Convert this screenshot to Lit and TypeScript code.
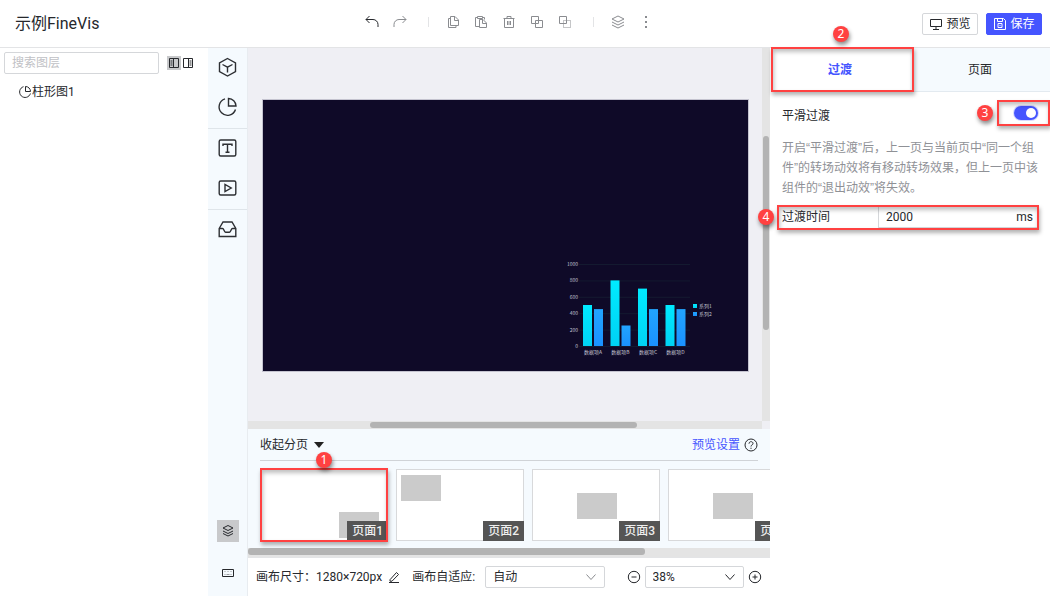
import { LitElement, html, css, svg } from "lit";
import { customElement, property, state } from "lit/decorators.js";
import { classMap } from "lit/directives/class-map.js";

const icon = (size: number, body: unknown, cls = "") =>
  html`<svg class="ico ${cls}" width=${size} height=${size} viewBox="0 0 ${size} ${size}" aria-hidden="true">${body}</svg>`;

const icons = {
  undo: icon(16, svg`<path d="M5.500 2 2 5.500 5.500 9M2 5.500h7a5 5 0 0 1 5 5V13"/>`, "dark"),
  redo: icon(16, svg`<path d="M10.500 2 14 5.500 10.500 9M14 5.500H7a5 5 0 0 0-5 5V13"/>`),
  copy: icon(16, svg`<path d="M5.500 2.500h4.500l3.500 3.500v5.500h-8zM9.500 2.500v4h4M5.500 4.500h-2v9h7.500v-2"/>`),
  paste: icon(16, svg`<path d="M6.500 12.500h-4v-9h2M10 3.500h1.500v2M4.500 2.500h5v2h-5zM6.500 5.500h3.500l3.500 3.500v4.500h-7zM9.500 5.500v4h4"/>`),
  trash: icon(16, svg`<path d="M2.500 4.500h11M6 4.500v-2h4v2M3.500 4.500v9h9v-9M6.500 7v4M8 7v4M9.500 7v4"/>`),
  group: icon(16, svg`<path d="M2.500 2.500h7v7h-7zM6.500 6.500h7v7h-7z"/>`),
  ungroup: icon(16, svg`<path d="M2.500 2.500h7v7h-7z"/><path stroke-dasharray="1 1" d="M6.500 6.500h7v7h-7z"/>`),
  layers: icon(16, svg`<path d="m8 2 6 3-6 3-6-3zM2 8l6 3 6-3M2 11l6 3 6-3"/>`),
  more: icon(16, svg`<path class="solid" d="M7 2h2v2H7zM7 7h2v2H7zM7 12h2v2H7z"/>`),
  monitor: icon(14, svg`<path d="M1.500 2.500h11v7h-11zM7 9.500v3M4 12.500h6"/>`, "dark"),
  save: icon(14, svg`<path d="M1.500 1.500h9l2 2v9h-11zM4.500 1.500v3h5v-3M5 6.500h4v4H5zM7 8v1"/>`, "light"),
  panelLeft: icon(12, svg`<path d="M1.500 1.500h9v9h-9zM5.500 1.500v9M2.500 4h2M2.500 6h2M2.500 8h2"/>`, "dark"),
  panelRight: icon(12, svg`<path d="M1.500 1.500h9v9h-9zM6.500 1.500v9M7.500 4h2M7.500 6h2M7.500 8h2"/>`, "dark"),
  pie: icon(14, svg`<path d="M5.500 1.700A5.500 5.500 0 1 0 12.400 8.500M7.500 1.500v5h5a5 5 0 0 0-5-5z"/>`, "dark"),
  cube: icon(20, svg`<path d="m10 1.500 8 4.300v8.900l-8 4.300-8-4.300V5.800zM5 7.500l5 2.700 5-2.700M10 10.200v5.300"/>`, "rail"),
  pieBig: icon(20, svg`<path d="M7.500 1.900A8.400 8.400 0 1 0 18 12.500M11 1.500v7.500h7.500A7.600 7.600 0 0 0 11 1.500z"/>`, "rail"),
  text: icon(20, svg`<rect x="1.700" y="2" width="16.600" height="16" rx="1.500"/><path d="M5.500 8V6.300h9V8M10 6.300v7.900M8 14.200h4"/>`, "rail"),
  play: icon(20, svg`<rect x="1.700" y="3" width="16.600" height="14" rx="1.500"/><path d="M7.500 6.500v7l6.200-3.500z"/>`, "rail"),
  inbox: icon(20, svg`<path d="M1.700 9.500 5.500 3h9l3.800 6.500v8H1.700zM1.700 9.500H5c1.500 0 1.500 3.700 3 3.700h4c1.500 0 1.500-3.700 3-3.700h3.300"/>`, "rail"),
  layersSmall: icon(14, svg`<path d="m7 1.500 5 2.500-5 2.500L2 4zM2 7l5 2.500L12 7M2 9.500 7 12l5-2.500"/>`, "dark"),
  keyboard: icon(14, svg`<path d="M1.500 3.500h11v7h-11z"/><path class="faint" d="M3.500 5.500h1M6.500 5.500h1M9.500 5.500h1M3.500 8.500h1M5.500 8.500h3M9.500 8.500h1"/>`, "dark"),
  help: icon(14, svg`<circle cx="7" cy="7" r="6"/><path d="M5 5.700C5 3 9 3 9 5.500 9 7 7 6.800 7 8.500M7 9.700v1.200"/>`, "dark"),
  pencil: icon(12, svg`<path d="M2 8.700 8.500 1.500l2 2L4 10.200H2zM1 11.500h10"/>`, "dark"),
  minus: icon(14, svg`<circle cx="7" cy="7" r="5.700"/><path d="M4.500 7h5"/>`, "dark"),
  plus: icon(14, svg`<circle cx="7" cy="7" r="5.700"/><path d="M4.500 7h5M7 4.500v5"/>`, "dark"),
  chevron: icon(12, svg`<path d="m1.500 3.500 4.500 5 4.500-5"/>`),
};

const iconCss = css`
  .ico { display: block; flex: none; fill: none; stroke: #8a8c90; stroke-width: 1; }
  .ico .solid { fill: #8a8c90; stroke: none; }
  .ico .faint { stroke: #9a9ca0; }
  .ico.dark { stroke: #26282c; }
  .ico.light { stroke: #fff; }
  .ico.rail { stroke: #2d2f33; stroke-width: 1.4; }
  * { box-sizing: border-box; }
  button { font: inherit; color: inherit; background: none; border: 0; padding: 0; }
`;

@customElement("step-badge")
export class StepBadge extends LitElement {
  @property({ type: Number }) step = 1;
  static styles = css`
    :host {
      position: absolute; z-index: 3; width: 16px; height: 16px; border-radius: 50%;
      background: #ff4141; color: #fff; box-shadow: 1px 3px 4px rgba(0, 0, 0, 0.45);
      font: 12px/16px "Noto Sans", sans-serif; text-align: center;
    }
  `;
  render() { return html`${this.step}`; }
}

@customElement("bar-chart")
export class BarChart extends LitElement {
  static styles = css`
    svg { display: block; width: 100%; }
    text { font: 5px "Noto Sans CJK SC", sans-serif; fill: #c0c1d0; }
    .axis { text-anchor: end; }
    .cat { text-anchor: middle; }
    .grid { stroke: #141a30; }
    .a { fill: url(#a); }
    .b { fill: url(#b); }
  `;
  private data = [
    { name: "数据项A", a: 500, b: 450 },
    { name: "数据项B", a: 800, b: 250 },
    { name: "数据项C", a: 700, b: 450 },
    { name: "数据项D", a: 500, b: 450 },
  ];
  private y(v: number) { return 86 - v * 0.082; }
  render() {
    return html`<svg viewBox="0 0 150 100" role="img" aria-label="柱形图1">
      <defs>
        <linearGradient id="a" x2="0" y2="1"><stop stop-color="#00eaff"/><stop offset="1" stop-color="#00d2f4"/></linearGradient>
        <linearGradient id="b" x2="0" y2="1"><stop stop-color="#22a4ff"/><stop offset="1" stop-color="#1a92ff"/></linearGradient>
      </defs>
      ${[0, 200, 400, 600, 800, 1000].map((v) => svg`
        <line class="grid" x1="17" x2="128" y1=${this.y(v) + 0.5} y2=${this.y(v) + 0.5}/>
        <text class="axis" x="16" y=${this.y(v) + 2}>${v}</text>`)}
      ${this.data.map((d, i) => {
        const x = 21 + i * 27.5;
        return svg`
          <rect class="a" x=${x} y=${this.y(d.a)} width="9" height=${d.a * 0.082}/>
          <rect class="b" x=${x + 11} y=${this.y(d.b)} width="9" height=${d.b * 0.082}/>
          <text class="cat" x=${x + 10} y="94">${d.name}</text>`;
      })}
      <rect class="a" x="131" y="44" width="4" height="4"/><text x="137" y="48">系列1</text>
      <rect class="b" x="131" y="52" width="4" height="4"/><text x="137" y="56">系列2</text>
    </svg>`;
  }
}

@customElement("app-root")
export class AppRoot extends LitElement {
  @state() private tab = 0;
  private pages = [
    { name: "页面1", place: "end" },
    { name: "页面2", place: "start" },
    { name: "页面3", place: "center" },
    { name: "页面4", place: "center" },
  ];

  static styles = [iconCss, css`
    :host {
      display: flex; flex-direction: column; height: 100vh; overflow: hidden; background: #fff;
      font: 12px/20px Roboto, "Noto Sans CJK SC", sans-serif; color: #26282c;
    }
    header {
      display: grid; grid-template-columns: 248px 1fr 280px; align-items: center; flex: none;
      height: 48px; border-bottom: 1px solid #e3e4e6;
    }
    h1 { margin: 0; padding-left: 15px; font-size: 16px; font-weight: 400; line-height: 24px; }
    .tools { display: flex; align-items: center; justify-content: center; gap: 12px; padding-bottom: 4px; }
    .sep { width: 1px; height: 10px; background: #e3e4e6; margin: 0 4px 0 8px; }
    .actions { display: flex; justify-content: flex-end; gap: 8px; padding-right: 8px; }
    .actions button {
      display: flex; align-items: center; justify-content: center; gap: 3px; width: 56px; height: 22px;
      border: 1px solid #d5d7da; border-radius: 2px;
    }
    .actions .primary { background: #4555ff; border-color: #4555ff; color: #fff; }
    .body { display: flex; flex: 1; min-height: 0; }

    .tree { width: 208px; flex: none; padding: 4px; }
    .search { display: flex; align-items: center; }
    .search input {
      flex: 1; min-width: 0; height: 22px; padding: 0 7px; font: inherit; border: 1px solid #d5d7da;
      border-radius: 2px; outline: 0; margin-right: 8px;
    }
    .search input::placeholder { color: #bfc1c5; }
    .search button { padding: 1px; }
    .search .on { background: #c8c9cb; }
    .search .swap { margin-right: 9px; }
    .layer { display: flex; align-items: center; padding: 8px 14px; }

    .rail { width: 40px; flex: none; display: flex; flex-direction: column; background: #f5fafe; border-right: 1px solid #e8ecf0; }
    .rail .set { display: flex; flex-direction: column; align-items: center; }
    .rail .set button { padding: 9px 10px 11px; }
    .rail .set + .set { border-top: 1px solid #dfe5ea; }
    .rail .foot { margin-top: auto; display: flex; flex-direction: column; align-items: center; gap: 20px; padding-bottom: 12px; }
    .rail .foot button { padding: 4px; }
    .rail .foot .on { background: #c8c9cb; }

    main { flex: 1; min-width: 0; display: flex; flex-direction: column; }
    .stage { flex: 1; min-height: 0; display: grid; grid-template: 1fr 8px / 1fr 8px; background: #efeff4; }
    .view { display: flex; align-items: center; justify-content: center; padding: 2px 13px 0 14px; min-height: 0; }
    .board {
      flex: 1; aspect-ratio: 1280 / 720; display: flex; align-items: flex-end; justify-content: flex-end;
      padding: 0 36px 11px 0; background: #0f0a28; border: 1px solid #c4c3cf;
    }
    .board bar-chart { width: 150px; }
    .track { background: #e4e4e4; display: flex; }
    .track i { display: block; background: #b3b3b3; border-radius: 3px; }
    .vert { flex-direction: column; padding: 0 1px; }
    .vert i { height: 52%; margin-top: 88px; }
    .horiz { padding: 1px 0; }
    .horiz i { width: 52%; margin-left: 122px; }

    .pages { position: relative; flex: none; background: #f5fafe; }
    .pages .top {
      display: flex; align-items: center; justify-content: space-between; margin: 0 12px; height: 32px;
      border-bottom: 1px solid #d0d3d7;
    }
    .top button, .top span { display: flex; align-items: center; gap: 4px; }
    .caret { border: 5px solid transparent; border-top: 6px solid #222; border-bottom: 0; margin-left: 2px; }
    a { color: #4555ff; text-decoration: none; }
    .strip { display: flex; gap: 8px; padding: 8px 12px 7px; overflow: hidden; }
    .thumb {
      position: relative; flex: none; width: 128px; height: 72px; padding: 5px 4px; display: flex;
      border: 1px solid #d8d9db; background: #fff;
    }
    .thumb i { width: 40px; height: 26px; background: #cbcbcb; }
    .thumb.end { justify-content: flex-end; align-items: flex-end; padding: 2px 8px; }
    .thumb.center { justify-content: center; align-items: center; padding: 6px 4px 4px 6px; }
    .thumb b { position: absolute; right: -1px; bottom: -1px; padding: 0 5px; font-weight: 500; color: #eee; background: #555; }
    .scroll { height: 9px; padding: 0 0 2px; }
    .scroll i { width: 76%; }

    .status { display: flex; align-items: center; flex: none; height: 39px; padding: 0 8px; border-top: 1px solid #e3e4e6; white-space: nowrap; }
    .status .pencil { margin: 0 12px 0 6px; }
    .pick { position: relative; display: flex; align-items: center; }
    .pick select {
      appearance: none; width: 100%; height: 22px; padding: 0 7px; font: inherit; color: inherit; background: #fff;
      border: 1px solid #d5d7da; border-radius: 2px;
    }
    .pick .ico { position: absolute; right: 8px; pointer-events: none; }
    .pick.dark .ico { stroke: #26282c; }
    .fit { width: 120px; margin: 0 22px 0 10px; }
    .zoom { width: 100px; margin: 0 4px; }

    aside { position: relative; width: 280px; flex: none; }
    .tabs { display: flex; height: 44px; }
    .tabs button { flex: 1; background: #f5fafe; border-bottom: 1px solid #e3eaf0; }
    .tabs .active { background: #fff; color: #4555ff; font-weight: 700; border-color: transparent; }
    .props { padding: 14px 12px; }
    .row { display: flex; align-items: flex-start; justify-content: space-between; }
    .switch {
      appearance: none; width: 24px; height: 14px; margin: 0; border-radius: 7px; background: #4555ff; display: flex;
      align-items: center; justify-content: flex-end; padding: 2px; box-shadow: 0 0 0 1px #d5d9ff;
    }
    .switch::before { content: ""; width: 10px; height: 10px; border-radius: 50%; background: #fff; }
    .hint { margin: 12px 0 8px; color: #8f9196; font-family: "Liberation Sans", "Noto Sans CJK SC", sans-serif; }
    .time { display: flex; align-items: center; }
    .time label { flex: none; width: 96px; }
    .field { flex: 1; min-width: 0; display: flex; height: 22px; align-items: center; padding: 0 4px 0 7px; border: 1px solid #d5d7da; }
    .field input { flex: 1; min-width: 0; border: 0; padding: 0; outline: 0; background: none; font: inherit; color: inherit; }

    .mark { position: absolute; z-index: 2; border: 2px solid #ff4141; box-shadow: 1px 3px 4px rgba(0, 0, 0, 0.3), inset 1px 3px 4px rgba(0, 0, 0, 0.25); pointer-events: none; }
    .m1 { left: 12px; top: 39px; width: 128px; height: 74px; }
    .m2 { left: 1px; top: -1px; width: 143px; height: 45px; }
    .m3 { right: 0; top: 52px; width: 53px; height: 26px; }
    .m4 { left: 7px; right: 11px; top: 157px; height: 25px; }
    .s1 { left: 68px; top: 23px; }
    .s2 { left: 63px; top: -22px; }
    .s3 { right: 57px; top: 57px; }
    .s4 { left: -12px; top: 161px; }
  `];

  render() {
    return html`
      <header>
        <h1>示例FineVis</h1>
        <div class="tools">
          <button aria-label="撤销">${icons.undo}</button>
          <button aria-label="重做">${icons.redo}</button>
          <span class="sep"></span>
          <button aria-label="复制">${icons.copy}</button>
          <button aria-label="粘贴">${icons.paste}</button>
          <button aria-label="删除">${icons.trash}</button>
          <button aria-label="组合">${icons.group}</button>
          <button aria-label="取消组合">${icons.ungroup}</button>
          <span class="sep"></span>
          <button aria-label="图层">${icons.layers}</button>
          <button aria-label="更多">${icons.more}</button>
        </div>
        <div class="actions">
          <button>${icons.monitor}预览</button>
          <button class="primary">${icons.save}保存</button>
        </div>
      </header>
      <div class="body">
        <nav class="tree">
          <div class="search">
            <input type="text" placeholder="搜索图层" aria-label="搜索图层">
            <button class="on" aria-label="左侧">${icons.panelLeft}</button>
            <button class="swap" aria-label="右侧">${icons.panelRight}</button>
          </div>
          <div class="layer">${icons.pie}<span>柱形图1</span></div>
        </nav>
        <div class="rail">
          <div class="set">
            <button aria-label="组件">${icons.cube}</button>
            <button aria-label="图表">${icons.pieBig}</button>
          </div>
          <div class="set">
            <button aria-label="文本">${icons.text}</button>
            <button aria-label="媒体">${icons.play}</button>
          </div>
          <div class="set"><button aria-label="资源">${icons.inbox}</button></div>
          <div class="foot">
            <button class="on" aria-label="图层">${icons.layersSmall}</button>
            <button aria-label="快捷键">${icons.keyboard}</button>
          </div>
        </div>
        <main>
          <div class="stage">
            <div class="view"><div class="board"><bar-chart></bar-chart></div></div>
            <div class="track vert"><i></i></div>
            <div class="track horiz"><i></i></div>
          </div>
          <section class="pages">
            <div class="top">
              <button>收起分页<i class="caret"></i></button>
              <span><a href="#preview">预览设置</a>${icons.help}</span>
            </div>
            <div class="strip">
              ${this.pages.map((p) => html`<div class="thumb ${p.place}"><i></i><b>${p.name}</b></div>`)}
            </div>
            <div class="track scroll"><i></i></div>
            <div class="mark m1"></div>
            <step-badge class="s1" step="1"></step-badge>
          </section>
          <footer class="status">
            <span>画布尺寸：1280×720px</span>
            <button class="pencil" aria-label="编辑尺寸">${icons.pencil}</button>
            <label for="fit">画布自适应:</label>
            <div class="pick fit"><select id="fit"><option>自动</option></select>${icons.chevron}</div>
            <button aria-label="缩小">${icons.minus}</button>
            <div class="pick zoom dark"><select aria-label="缩放"><option>38%</option></select>${icons.chevron}</div>
            <button aria-label="放大">${icons.plus}</button>
          </footer>
        </main>
        <aside>
          <div class="tabs">
            ${["过渡", "页面"].map((t, i) => html`
              <button class=${classMap({ active: this.tab === i })} @click=${() => (this.tab = i)}>${t}</button>`)}
          </div>
          <div class="props">
            <div class="row">
              <label for="smooth">平滑过渡</label>
              <input id="smooth" class="switch" type="checkbox" role="switch" checked>
            </div>
            <p class="hint">开启“平滑过渡”后，上一页与当前页中“同一个组件”的转场动效将有移动转场效果，但上一页中该组件的“退出动效”将失效。</p>
            <div class="time">
              <label for="ms">过渡时间</label>
              <div class="field"><input id="ms" type="text" value="2000"><span>ms</span></div>
            </div>
          </div>
          <div class="mark m2"></div>
          <div class="mark m3"></div>
          <div class="mark m4"></div>
          <step-badge class="s2" step="2"></step-badge>
          <step-badge class="s3" step="3"></step-badge>
          <step-badge class="s4" step="4"></step-badge>
        </aside>
      </div>`;
  }
}
